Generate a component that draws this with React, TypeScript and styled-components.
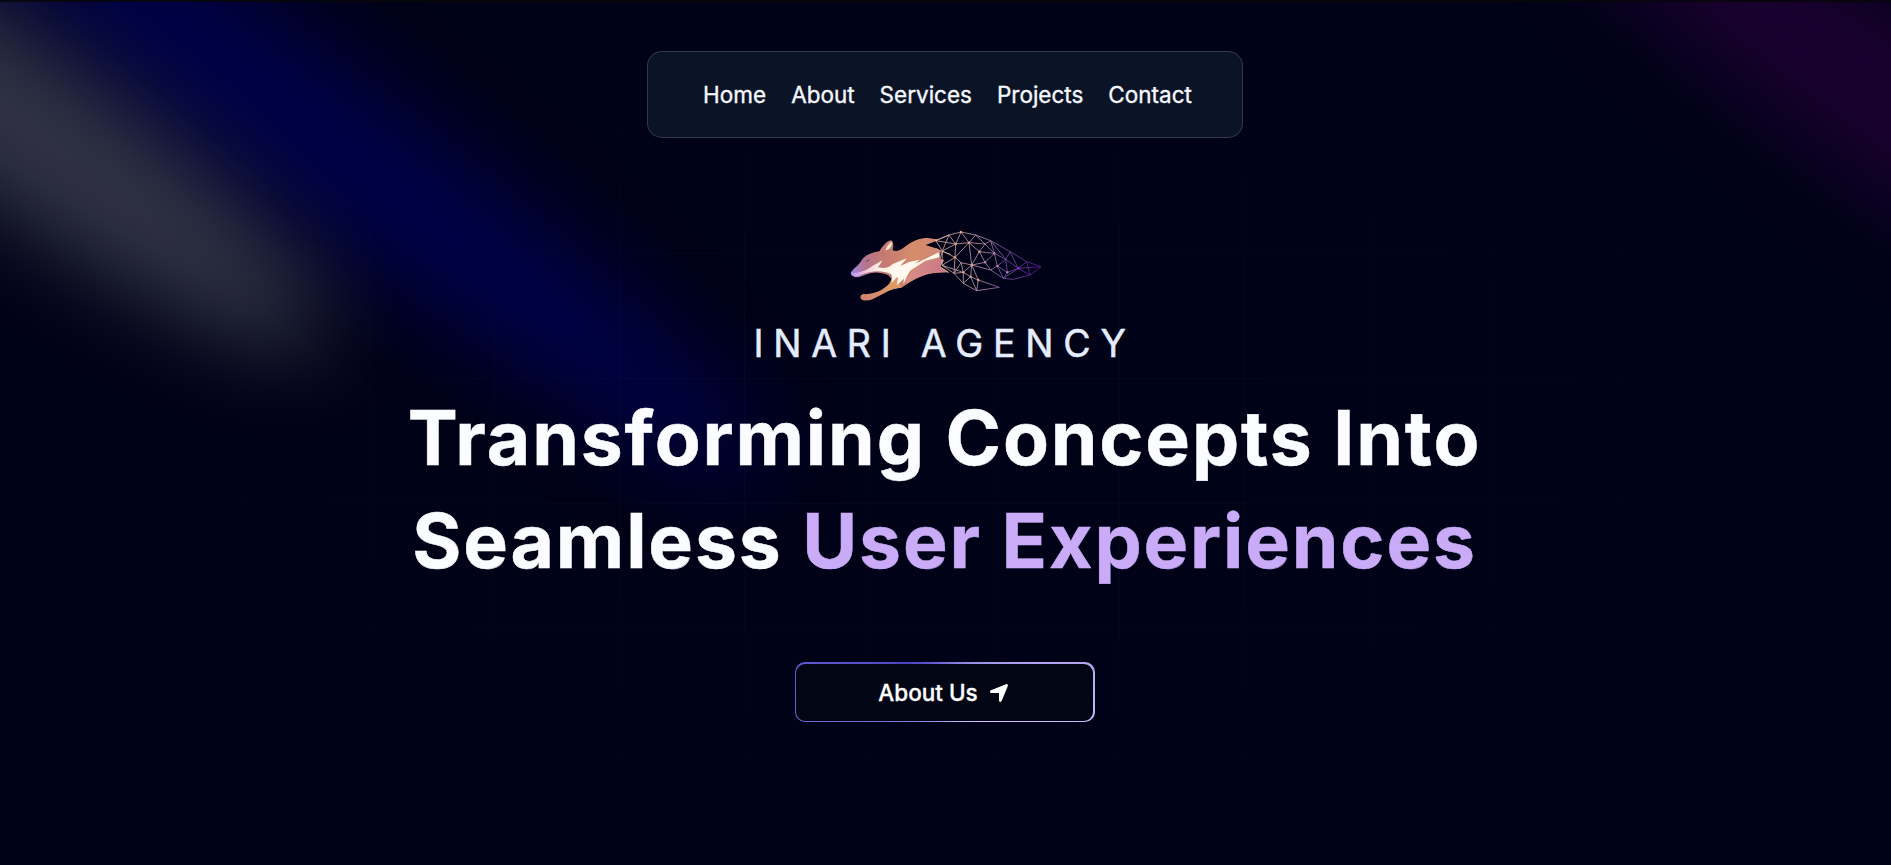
import React from "react";
import styled, { createGlobalStyle } from "styled-components";
import { FaLocationArrow } from "react-icons/fa6";

const GlobalStyle = createGlobalStyle`
  *, *::before, *::after { box-sizing: border-box; }
  body {
    margin: 0;
    background: #000217;
    color: #fff;
    font-family: Inter, "Liberation Sans", sans-serif;
    overflow: hidden;
  }
`;

const Page = styled.div`
  position: relative;
  height: 865px;
  overflow: hidden;
  background: #000217;
`;

const Lights = styled.svg`
  position: absolute;
  inset: 0;
  width: 100%;
  height: 100%;
  pointer-events: none;
`;

const Grid = styled.div`
  position: absolute;
  inset: 0;
  background-image:
    linear-gradient(to right, rgba(255, 255, 255, 0.018) 1px, transparent 1px),
    linear-gradient(to bottom, rgba(255, 255, 255, 0.018) 1px, transparent 1px);
  background-size: 125px 125px;
  background-position: -6px 3px;
  mask-image: radial-gradient(ellipse at center, #000 20%, transparent 75%);
`;

const TopEdge = styled.div`
  position: absolute;
  inset: 0 0 auto;
  height: 2px;
  background: rgba(6, 6, 8, 0.8);
`;

const Content = styled.div`
  position: relative;
  display: flex;
  flex-direction: column;
  align-items: center;
  padding: 51px 2px 0 0;
`;

const Nav = styled.nav`
  display: flex;
  align-items: center;
  justify-content: center;
  gap: 25px;
  width: 596px;
  height: 87px;
  padding-left: 6px;
  border: 1px solid rgba(255, 255, 255, 0.16);
  border-radius: 15px;
  background: #0b1426;
`;

const NavLink = styled.a`
  color: #f6f8ff;
  font-size: 22.5px;
  line-height: 35px;
  text-decoration: none;
  -webkit-text-stroke: 0.35px currentColor;
`;

const Logo = styled.svg`
  display: block;
  width: 210px;
  height: 90px;
  margin: 82px 0 0 1px;
`;

const Brand = styled.h2`
  margin: 11px 0 0;
  color: #e4ecff;
  font-size: 37.5px;
  font-weight: 400;
  line-height: 45px;
  letter-spacing: 9.75px;
  text-transform: uppercase;
  white-space: nowrap;
  -webkit-text-stroke: 0.5px currentColor;
`;

const Headline = styled.h1`
  margin: 20px 0 0;
  color: #fbfcff;
  font-size: 75px;
  font-weight: 700;
  line-height: 103px;
  letter-spacing: 0.025em;
  text-align: center;
  white-space: nowrap;
  -webkit-text-stroke: 0.5px currentColor;
`;

const Accent = styled.span`
  color: #c9abf7;
`;

const ButtonFrame = styled.button`
  display: flex;
  width: 300px;
  height: 60px;
  margin-top: 70px;
  padding: 2px 2px 1px 1px;
  border: 0;
  border-radius: 10px;
  background: conic-gradient(from 125deg, #d8c8ff 0%, #4a44c4 50%, #d8c8ff 100%);
  font-family: inherit;
`;

const ButtonFace = styled.span`
  display: flex;
  flex: 1;
  align-items: center;
  justify-content: center;
  gap: 10px;
  border-radius: 9px;
  background: #020514;
  color: #fff;
  font-size: 22.5px;
  font-weight: 500;
  -webkit-text-stroke: 0.3px currentColor;
`;

const links = ["Home", "About", "Services", "Projects", "Contact"];

const nodes: [number, number][] = [
  [17, 62], [57, 45], [93, 36], [137, 45], [182, 62], [240, 95], [290, 125], [333, 140],
  [77, 72], [117, 68], [165, 72], [37, 93], [75, 112], [148, 95], [193, 100], [227, 118],
  [93, 128], [125, 135], [165, 127], [202, 138], [232, 157], [265, 145], [182, 150], [220, 175],
  [250, 178], [300, 165], [36, 136], [72, 160], [100, 157], [122, 170], [145, 180], [100, 190],
  [140, 212], [208, 202],
];

const edges: [number, number][] = [
  [0, 1], [1, 2], [2, 3], [3, 4], [4, 5], [5, 6], [6, 7], [0, 11], [1, 11], [1, 8], [2, 8], [2, 9],
  [3, 9], [3, 10], [4, 10], [8, 9], [9, 10], [8, 11], [8, 12], [11, 12], [0, 8], [9, 12], [9, 13],
  [10, 13], [10, 14], [4, 14], [4, 15], [5, 15], [12, 16], [9, 17], [13, 17],
  [13, 18], [13, 14], [14, 18], [14, 19], [14, 15], [15, 19], [15, 20], [15, 21], [5, 21], [6, 21],
  [7, 21], [17, 18], [18, 22], [17, 22], [19, 22], [19, 20], [20, 21], [20, 23], [22, 23], [19, 23],
  [21, 23], [23, 24], [24, 25], [21, 25], [25, 7], [6, 25], [12, 26], [11, 26], [26, 27],
  [12, 27], [16, 27], [16, 28], [17, 28], [26, 28], [27, 28], [28, 29], [17, 29], [17, 30],
  [29, 30], [27, 31], [28, 31], [29, 31], [29, 32], [30, 32], [31, 32], [32, 33], [30, 33], [16, 17],
];

const brightNodes = [2, 8, 9, 13, 14, 12, 17, 18, 20, 21, 28, 29, 19, 30];

const FoxLogo = () => (
  <Logo viewBox="0 0 630 270" aria-label="Inari Agency">
    <defs>
      <linearGradient id="fur" x1="30" y1="150" x2="330" y2="110" gradientUnits="userSpaceOnUse">
        <stop offset="0" stopColor="#9c86f0" />
        <stop offset="0.16" stopColor="#b5748a" />
        <stop offset="0.36" stopColor="#c67a72" />
        <stop offset="0.65" stopColor="#d68d6a" />
        <stop offset="1" stopColor="#cf8479" />
      </linearGradient>
      <linearGradient id="leg" x1="150" y1="190" x2="65" y2="240" gradientUnits="userSpaceOnUse">
        <stop offset="0" stopColor="#de9a66" />
        <stop offset="1" stopColor="#cf8270" />
      </linearGradient>
      <linearGradient id="belly" x1="200" y1="190" x2="320" y2="130" gradientUnits="userSpaceOnUse">
        <stop offset="0" stopColor="#d98f88" />
        <stop offset="1" stopColor="#c97887" />
      </linearGradient>
      <linearGradient id="muzzle" x1="32" y1="0" x2="120" y2="0" gradientUnits="userSpaceOnUse">
        <stop offset="0" stopColor="#b394f5" />
        <stop offset="0.5" stopColor="#f3c7dc" />
        <stop offset="1" stopColor="#fff3e6" />
      </linearGradient>
      <linearGradient id="mesh" x1="10" y1="0" x2="335" y2="0" gradientUnits="userSpaceOnUse">
        <stop offset="0" stopColor="#eabba2" />
        <stop offset="0.45" stopColor="#c39cb0" />
        <stop offset="0.65" stopColor="#8258a8" />
        <stop offset="1" stopColor="#5c1799" />
      </linearGradient>
    </defs>
    <path
      fill="url(#fur)"
      d="M32 158C42 143 55 137 64 122C72 108 88 99 118 94C126 82 136 66 152 61C161 63 161 78 158 91C176 98 188 84 202 75C222 61 240 54 264 54L298 59L257 75L287 85L302 92L299 117L312 120L300 140L326 157C300 156 282 158 262 163C232 171 210 188 184 203C174 204 164 206 154 208L154 178C151 165 136 160 114 158C92 156 76 166 58 171C44 173 33 168 32 158Z"
    />
    <path
      fill="url(#leg)"
      d="M184 203C158 203 132 220 112 230C98 237 88 244 70 241C58 237 59 225 70 222C86 224 106 219 124 210C142 199 151 190 154 178L172 176Z"
    />
    <path fill="url(#belly)" d="M196 190C208 162 226 142 256 128L300 118L312 120L300 140L326 157C280 155 250 164 230 175Z" />
    <path fill="url(#muzzle)" d="M34 160C58 160 80 151 96 139L128 121L114 142C134 147 146 144 158 132L200 115L178 139L206 130L168 158L152 162C126 150 92 152 60 166C46 171 36 169 34 160Z" />
    <path fill="#fff8ee" d="M146 144L199 117L180 138L208 126L239 119L225 132L296 97L298 112L256 122L214 150C202 160 199 177 190 193L192 176L171 195C169 187 178 174 171 172L154 189C160 170 154 160 146 152Z" />
    <path fill="#ffe8d8" d="M136 91C141 80 146 70 156 65C157 76 151 84 142 90Z" />
    <path fill="#7b4d96" d="M76 123L91 117L84 125Z" />
    <g transform="translate(270 0)" fill="none" stroke="url(#mesh)" strokeWidth="2.3">
      <path d="M17 62L28 57L57 45M17 85L33 93L62 103M30 118L37 93M30 140L57 158" />
      <path d={edges.map(([a, b]) => `M${nodes[a].join(" ")}L${nodes[b].join(" ")}`).join("")} />
      {brightNodes.map((n) => (
        <circle
          key={n}
          cx={nodes[n][0]}
          cy={nodes[n][1]}
          r="3.6"
          stroke="none"
          fill={nodes[n][0] > 250 ? "#8a2be0" : nodes[n][0] > 160 ? "#b985c0" : "#e2a58e"}
        />
      ))}
    </g>
  </Logo>
);

const Spotlights = () => (
  <Lights viewBox="0 0 1891 865" preserveAspectRatio="none">
    <defs>
      <filter id="soft" x="-1000" y="-1000" width="4000" height="3000" filterUnits="userSpaceOnUse" colorInterpolationFilters="sRGB">
        <feGaussianBlur stdDeviation="46" />
      </filter>
    </defs>
    <g filter="url(#soft)">
      <ellipse rx="395" ry="80" fill="#f4f8ff" fillOpacity="0.205" transform="translate(5 112) rotate(35.5)" />
    </g>
    <g filter="url(#soft)">
      <ellipse rx="570" ry="70" fill="#0000ff" fillOpacity="0.225" transform="translate(312 130) rotate(37.5)" />
    </g>
    <g filter="url(#soft)">
      <ellipse rx="420" ry="76" fill="#700080" fillOpacity="0.24" transform="translate(1880 92) rotate(36)" />
    </g>
  </Lights>
);

export default function App() {
  return (
    <>
      <GlobalStyle />
      <Page>
        <Spotlights />
        <Grid />
        <TopEdge />
        <Content>
          <Nav>
            {links.map((label) => (
              <NavLink key={label} href={`#${label.toLowerCase()}`}>
                {label}
              </NavLink>
            ))}
          </Nav>
          <FoxLogo />
          <Brand>Inari Agency</Brand>
          <Headline>
            Transforming Concepts Into
            <br />
            Seamless <Accent>User Experiences</Accent>
          </Headline>
          <ButtonFrame>
            <ButtonFace>
              About Us
              <FaLocationArrow size={22} />
            </ButtonFace>
          </ButtonFrame>
        </Content>
      </Page>
    </>
  );
}
